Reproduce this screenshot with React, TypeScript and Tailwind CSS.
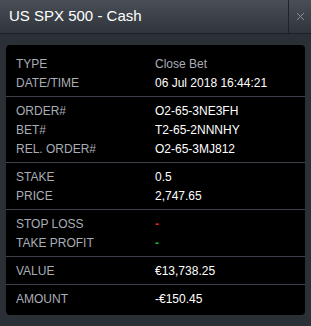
import { X } from "lucide-react";

type Row = { label: string; value: string; tone?: "muted" | "red" | "green" };

const groups: Row[][] = [
  [
    { label: "TYPE", value: "Close Bet", tone: "muted" },
    { label: "DATE/TIME", value: "06 Jul 2018 16:44:21" },
  ],
  [
    { label: "ORDER#", value: "O2-65-3NE3FH" },
    { label: "BET#", value: "T2-65-2NNNHY" },
    { label: "REL. ORDER#", value: "O2-65-3MJ812" },
  ],
  [
    { label: "STAKE", value: "0.5" },
    { label: "PRICE", value: "2,747.65" },
  ],
  [
    { label: "STOP LOSS", value: "-", tone: "red" },
    { label: "TAKE PROFIT", value: "-", tone: "green" },
  ],
  [{ label: "VALUE", value: "€13,738.25" }],
  [{ label: "AMOUNT", value: "-€150.45" }],
];

function valueClass(tone?: Row["tone"]) {
  if (tone === "muted") return "text-[#a9aeb6]";
  if (tone === "red") return "text-[#e0242a] font-bold";
  if (tone === "green") return "text-[#1fb53a] font-bold";
  return "text-white";
}

export default function App() {
  return (
    <div className="w-[311px] h-[326px] bg-[#2b3037] font-['Liberation_Sans',Arial,sans-serif] flex flex-col">

      {/* Header */}
      <div className="h-[34px] flex items-stretch bg-gradient-to-b from-[#4a4f57] to-[#30353c] border-b border-[#1c2026]">
        <div className="flex-1 flex items-center pl-[9px] text-[15px] text-white">
          US SPX 500 - Cash
        </div>
        <div className="w-[23px] flex items-center justify-center border-l border-[#1f2329] text-[#8c9199]">
          <X className="w-[13px] h-[13px]" strokeWidth={1.8} />
        </div>
      </div>

      {/* Details card */}
      <div className="mx-[6px] mt-[11px] bg-black rounded-[4px] pt-[5px] pb-[3px]">
        {groups.map((group, gi) => (
          <div
            key={gi}
            className={`py-1 ${gi > 0 ? "border-t border-[#3c414a]" : ""}`}
          >
            {group.map((row) => (
              <div key={row.label} className="h-[19px] flex items-center text-[12px] pl-[10px]">
                <span className="w-[139px] text-[#a9aeb6]">{row.label}</span>
                <span className={valueClass(row.tone)}>{row.value}</span>
              </div>
            ))}
          </div>
        ))}
      </div>
    </div>
  );
}
